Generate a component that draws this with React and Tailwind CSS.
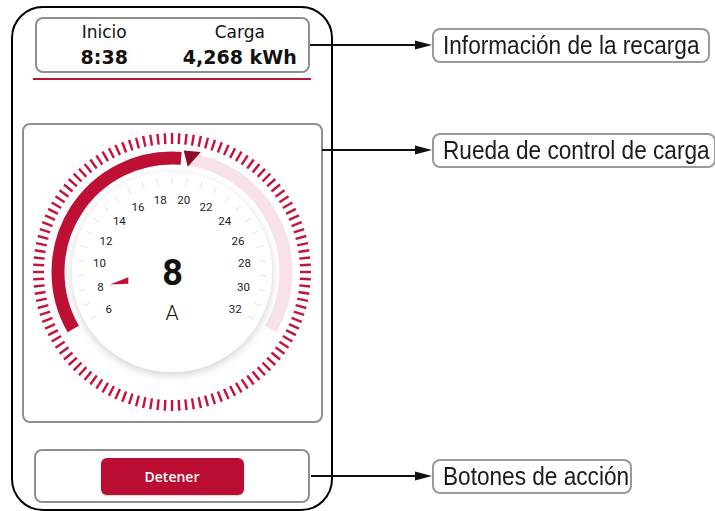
import React from "react";

const rad = (a) => (a * Math.PI) / 180;
const polar = (r, a) => [r * Math.sin(rad(a)), -r * Math.cos(rad(a))];
const arcPath = (r, a1, a2) => {
  const [x1, y1] = polar(r, a1);
  const [x2, y2] = polar(r, a2);
  const large = a2 - a1 > 180 ? 1 : 0;
  return `M${x1} ${y1} A${r} ${r} 0 ${large} 1 ${x2} ${y2}`;
};

function Gauge() {
  const outer = Array.from({ length: 120 }, (_, i) => i * 3);
  const minor = Array.from({ length: 27 }, (_, i) => -120 + (i * 240) / 26);
  const labels = Array.from({ length: 14 }, (_, k) => ({
    v: 6 + k * 2,
    a: -120 + (k * 240) / 13,
  }));
  const m1 = polar(122, 5.5);
  const m2 = polar(123.5, 13.5);
  const m3 = polar(106.5, 8.5);
  return (
    <svg
      width="290"
      height="290"
      viewBox="-145 -145 290 290"
      className="font-['Roboto',sans-serif]"
    >
      <defs>
        <filter id="sh" x="-30%" y="-30%" width="160%" height="160%">
          <feDropShadow dx="0" dy="3" stdDeviation="4" floodColor="#000" floodOpacity="0.18" />
        </filter>
      </defs>
      {outer.map((a) => {
        const [x1, y1] = polar(128, a);
        const [x2, y2] = polar(139, a);
        return (
          <line key={a} x1={x1} y1={y1} x2={x2} y2={y2} stroke="#c5133b" strokeWidth="2.4" />
        );
      })}
      <path d={arcPath(114, 8, 120)} fill="none" stroke="#f7e3e7" strokeWidth="13" />
      <path d={arcPath(114, -120, 4.6)} fill="none" stroke="#be1035" strokeWidth="13" />
      <polygon
        points={`${m1[0]},${m1[1]} ${m2[0]},${m2[1]} ${m3[0]},${m3[1]}`}
        fill="#8d0c26"
      />
      <circle cx="0" cy="0" r="100" fill="#fff" filter="url(#sh)" />
      {minor.map((a, i) => {
        const [x1, y1] = polar(88, a);
        const [x2, y2] = polar(95, a);
        return (
          <line key={i} x1={x1} y1={y1} x2={x2} y2={y2} stroke="#ececec" strokeWidth="1.5" />
        );
      })}
      {labels.map(({ v, a }) => {
        const [x, y] = polar(73, a);
        return (
          <text
            key={v}
            x={x}
            y={y}
            textAnchor="middle"
            dominantBaseline="central"
            fontSize="11.5"
            fill="#222"
          >
            {v}
          </text>
        );
      })}
      <polygon points="-62,12.5 -43.7,5.2 -43.7,11.8" fill="#c0103a" />
      <text
        x="0.5"
        y="1"
        textAnchor="middle"
        dominantBaseline="central"
        fontSize="36"
        fontWeight="700"
        fill="#111"
      >
        8
      </text>
      <text
        x="0"
        y="41"
        textAnchor="middle"
        dominantBaseline="central"
        fontSize="21"
        fontWeight="300"
        fill="#111"
      >
        A
      </text>
    </svg>
  );
}

function Callout({ text, w }) {
  return (
    <div
      className={`${w} h-[35px] border-2 border-[#9a9a9a] rounded-[8px] pl-[9px] flex items-center whitespace-nowrap bg-white`}
    >
      <span className="inline-block origin-left scale-x-[0.87] text-[26px] leading-[31px]">
        {text}
      </span>
    </div>
  );
}

function ArrowHead() {
  return (
    <svg width="17" height="10" viewBox="0 0 17 10" className="shrink-0">
      <polygon points="0,0.5 17,5 0,9.5" fill="#111" />
    </svg>
  );
}

export default function App() {
  return (
    <div className="relative w-[715px] h-[511px] overflow-hidden bg-white flex items-start">
      <div className="mt-[6px] ml-[11px] w-[322px] h-[505px] shrink-0 border-2 border-black rounded-[32px] flex flex-col items-center">
        <div className="mt-[9px] w-[275px] h-[56px] border-2 border-[#8f8f8f] rounded-[8px] grid grid-cols-2 pt-[3px] font-['DejaVu_Sans',sans-serif] text-[#111]">
          <div className="flex flex-col items-center">
            <span className="text-[17px] leading-[20px]">Inicio</span>
            <span className="mt-[3px] text-[19px] leading-[24px] font-bold">8:38</span>
          </div>
          <div className="flex flex-col items-center">
            <span className="text-[17px] leading-[20px]">Carga</span>
            <span className="mt-[3px] text-[19px] leading-[24px] font-bold">4,268 kWh</span>
          </div>
        </div>
        <div className="mt-[5px] w-[278px] h-[2px] bg-[#b8173c]" />
        <div className="mt-[43px] w-[301px] h-[300px] border-2 border-[#8f8f8f] rounded-[8px] flex items-center justify-center pb-[3px]">
          <Gauge />
        </div>
        <div className="mt-[26px] w-[276px] h-[54px] border-2 border-[#8f8f8f] rounded-[8px] flex items-center justify-center">
          <button className="w-[143px] h-[37px] rounded-[6px] bg-[#bb0d32] text-white text-[14px] font-semibold font-['Open_Sans',sans-serif] shadow-[0_1px_2px_rgba(0,0,0,0.2)]">
            Detener
          </button>
        </div>
      </div>

      <div className="ml-[99px] mt-[28px] flex flex-col items-start font-['Liberation_Sans',sans-serif] text-[#1b1b1b]">
        <Callout w="w-[278px]" text="Información de la recarga" />
        <div className="mt-[70px]">
          <Callout w="w-[284px]" text="Rueda de control de carga" />
        </div>
        <div className="mt-[291px]">
          <Callout w="w-[200px]" text="Botones de acción" />
        </div>
      </div>

      <div className="absolute left-[310px] top-[40px] w-[122px] h-[10px] flex items-center">
        <div className="flex-1 h-[1.5px] bg-[#111]" />
        <ArrowHead />
      </div>
      <div className="absolute left-[322px] top-[145px] w-[110px] h-[10px] flex items-center">
        <div className="flex-1 h-[1.5px] bg-[#111]" />
        <ArrowHead />
      </div>
      <div className="absolute left-[311px] top-[471px] w-[121px] h-[10px] flex items-center">
        <div className="flex-1 h-[1.5px] bg-[#111]" />
        <ArrowHead />
      </div>
    </div>
  );
}
